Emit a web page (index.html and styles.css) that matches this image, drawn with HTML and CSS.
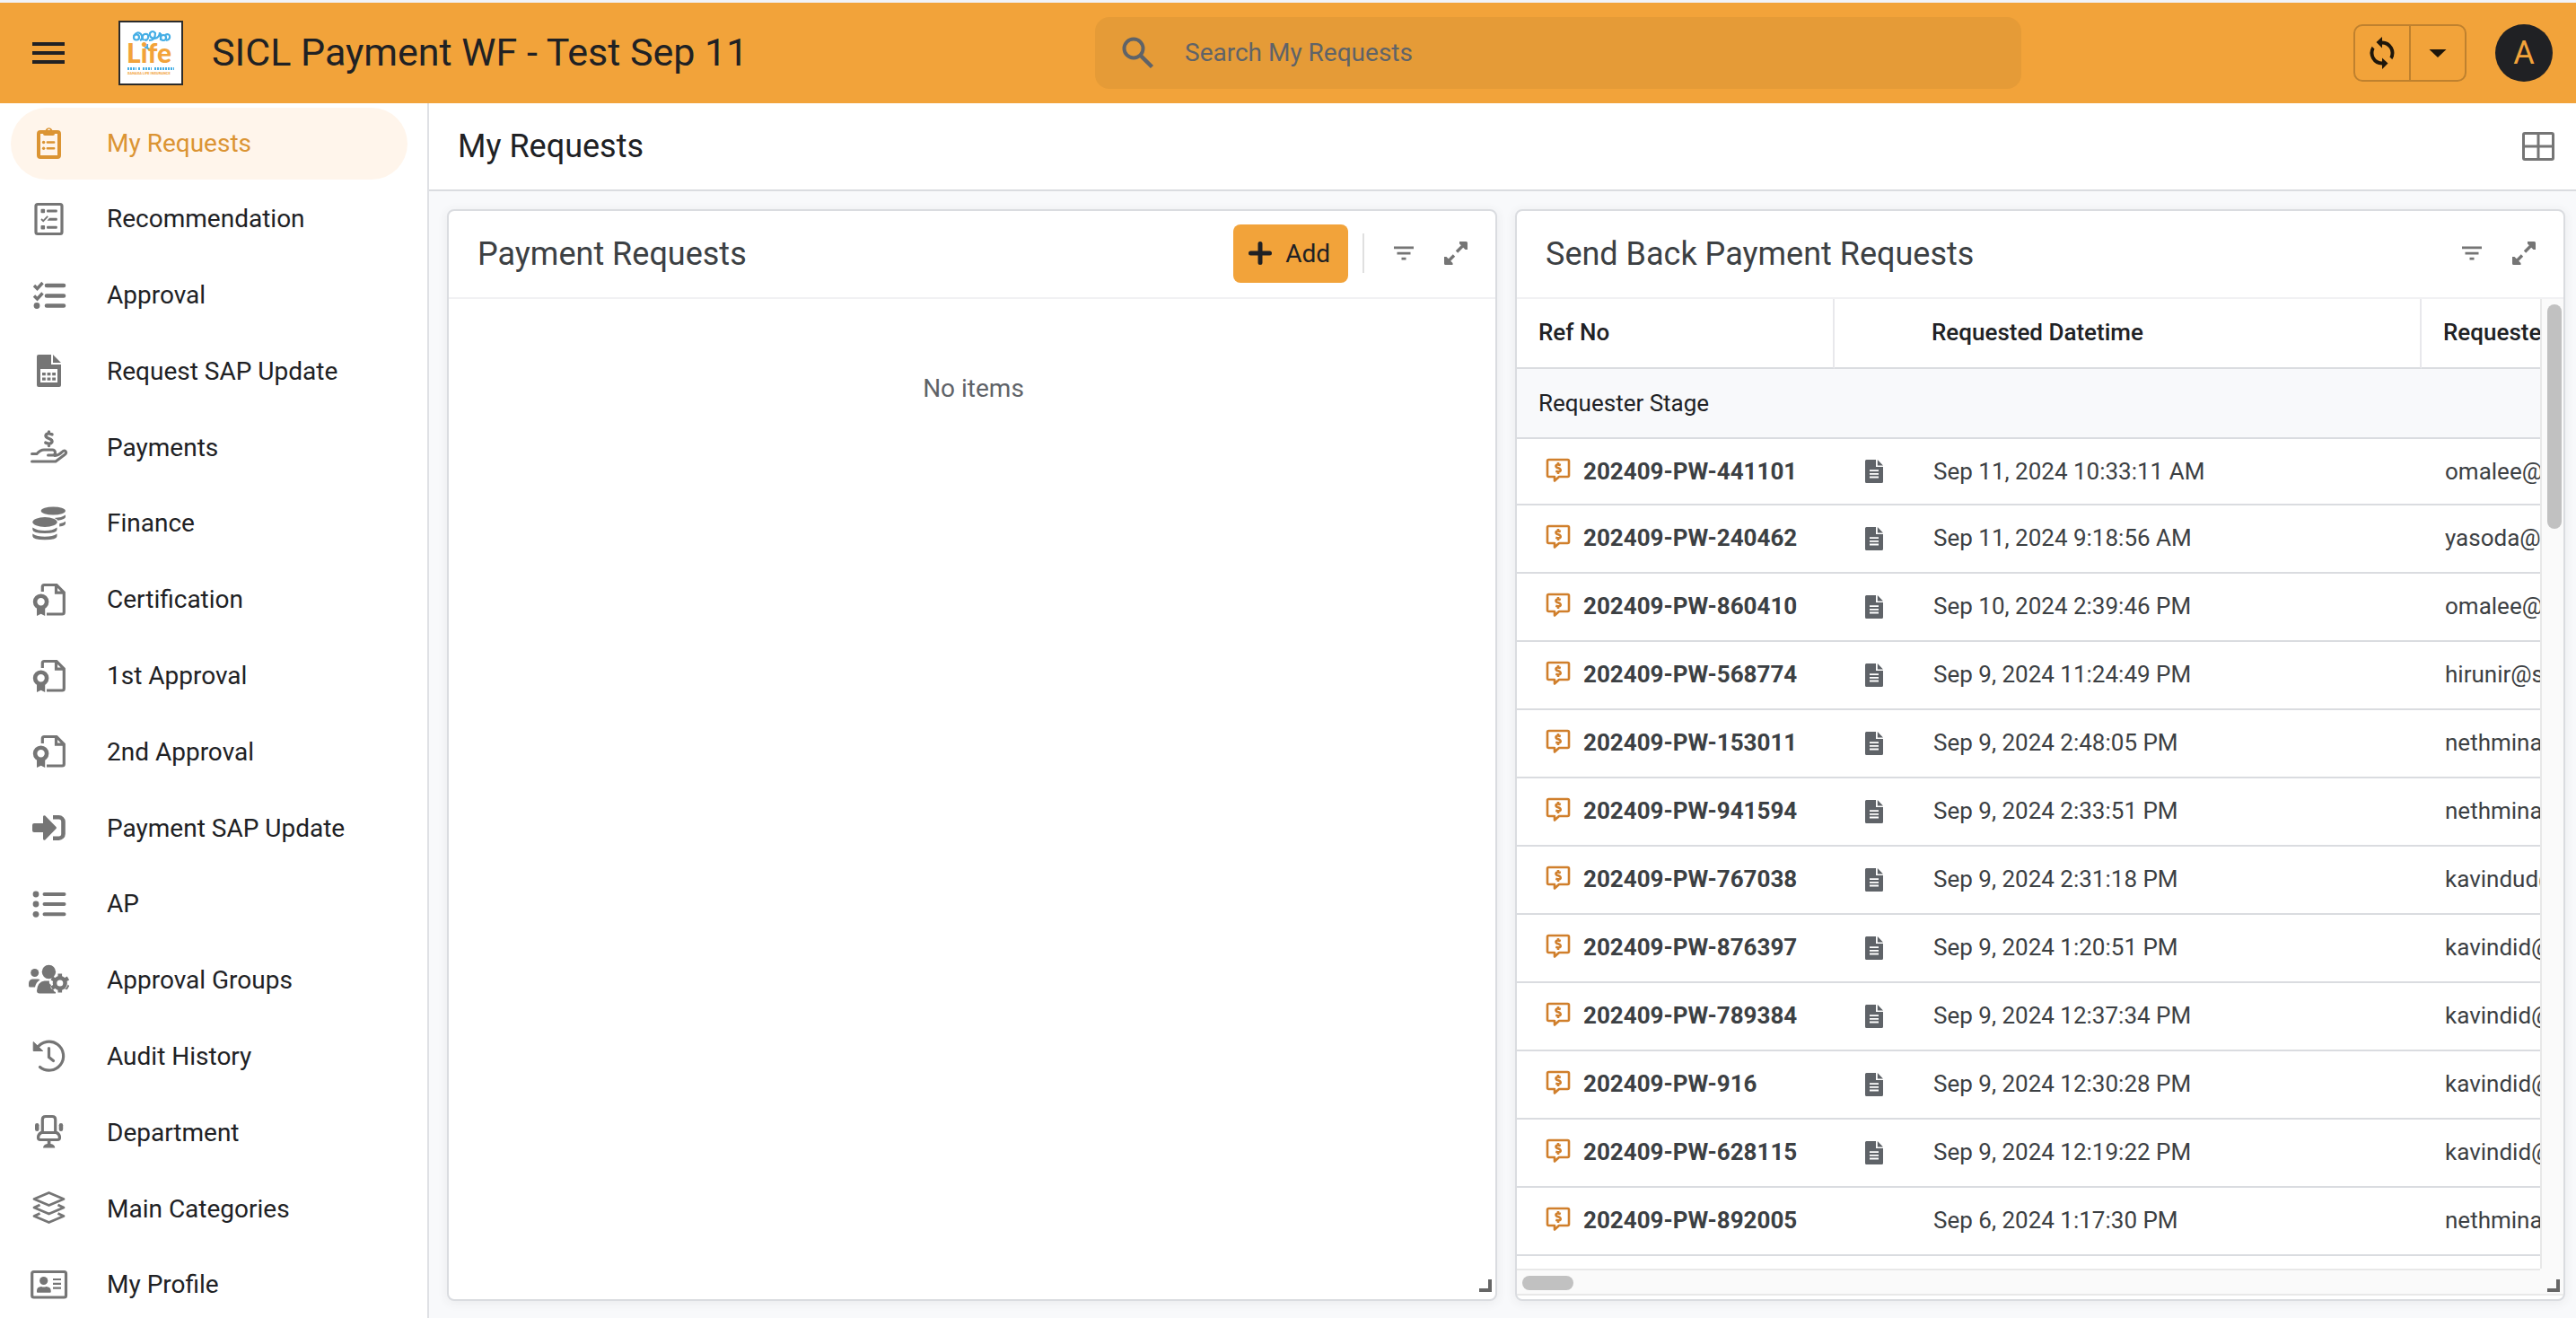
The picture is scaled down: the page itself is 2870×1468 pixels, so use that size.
FILE: index.html
```html
<!DOCTYPE html>
<html lang="en">
<head>
<meta charset="utf-8">
<title>SICL Payment WF - Test Sep 11</title>
<link rel="stylesheet" href="styles.css">
</head>
<body>
<svg class="sprite" aria-hidden="true">
  <symbol id="i-clipboard" viewBox="0 0 48 48"><rect x="13" y="12" width="23" height="28" rx="2" fill="none" stroke="currentColor" stroke-width="4"/><path fill="currentColor" fill-rule="evenodd" d="M18 10h2.600a4.200 4.200 0 0 1 7.800 0H31v4a2 2 0 0 1-2 2h-9a2 2 0 0 1-2-2zM24.500 8.600a1.500 1.500 0 1 0 0 3 1.500 1.500 0 0 0 0-3z"/><circle cx="18.600" cy="23.500" r="1.700" fill="currentColor"/><circle cx="18.600" cy="30.200" r="1.700" fill="currentColor"/><path d="M22.800 23.500h7.400M22.800 30.200h7.400" stroke="currentColor" stroke-width="2.400" stroke-linecap="round"/></symbol>
  <symbol id="i-ballot" viewBox="0 0 48 48"><rect x="10" y="7.500" width="29" height="33" rx="2" fill="none" stroke="currentColor" stroke-width="3.200"/><g fill="currentColor"><rect x="15.500" y="12.700" width="4.600" height="4.600" rx="1"/><rect x="15.500" y="31" width="4.600" height="4.600" rx="1"/><rect x="22" y="13.500" width="11.800" height="3" rx="1"/><rect x="22" y="31.800" width="11.800" height="3" rx="1"/><path d="M25 22.700h7.800a1 1 0 0 1 1 1v1a1 1 0 0 1-1 1H22.500z"/></g><path d="M16 24l2.200 2.200 5-5.400" fill="none" stroke="currentColor" stroke-width="1.800"/></symbol>
  <symbol id="i-checks" viewBox="0 0 48 48"><path d="M22 13h19M22 24.500h19M22 35.500h19" stroke="currentColor" stroke-width="4.600" stroke-linecap="round"/><path d="M8 13l3.500 3.500 6-6.500M8 24.500l3.500 3.500 6-6.500" fill="none" stroke="currentColor" stroke-width="3.400"/><circle cx="11" cy="35.500" r="3.400" fill="currentColor"/></symbol>
  <symbol id="i-sheet" viewBox="0 0 48 48"><path fill="currentColor" fill-rule="evenodd" d="M13 6h14v11h11v23a2 2 0 0 1-2 2H13a2 2 0 0 1-2-2V8a2 2 0 0 1 2-2zM15 22v15h19V22zM29 6l9 9h-9z"/><path fill="currentColor" d="M17 26h3.800v3.300H17zM22.600 26h3.800v3.300h-3.800zM28.200 26H32v3.300h-3.800zM17 31.500h3.800v3.300H17zM22.600 31.500h3.800v3.300h-3.800zM28.200 31.500H32v3.300h-3.800z"/></symbol>
  <symbol id="i-hand" viewBox="0 0 48 48"><g fill="none" stroke="currentColor" stroke-width="3" stroke-linecap="round" stroke-linejoin="round"><path d="M5.500 31.500H11q4-4.500 8-4.500h9.500a3 3 0 0 1 0 6H23.500M31 33.500q5-.5 8-4 2.500-2.500 4.200-.8 1.300 2-1.200 3.800L32 40H5.500"/><path d="M28 9.800q-6-2.200-7 1-.4 2.300 3.600 3.700 4.400 1.600 3.200 4.200-1.600 2.600-7 .4M24.500 7V8.500M24.500 20.500v2" stroke-width="3.400"/></g></symbol>
  <symbol id="i-coins" viewBox="0 0 48 48"><g fill="currentColor"><ellipse cx="29.300" cy="10" rx="13.600" ry="4.600"/><ellipse cx="20" cy="22.500" rx="13.700" ry="5.400"/><path d="M6.300 28.500q5 3.500 13.700 3.500t13.500-3.500v2.500q0 4-13.500 4T6.300 31zM6.300 35.500q5 3.300 13.700 3.300t13.500-3.300v2.700q0 4-13.500 4t-13.700-4zM43 14.500v2.300q0 2.700-8.500 3.900-1-1.500-4-2.700Q39 17.500 43 14.500zM43 21.800v2.200q0 2.500-6.800 3.500v-3.300q4.500-.6 6.800-2.400z"/></g></symbol>
  <symbol id="i-cert" viewBox="0 0 48 48"><g fill="none" stroke="currentColor" stroke-width="3.200"><path d="M17.300 15V9.500a2 2 0 0 1 2-2H33l8.300 8.300V38a2 2 0 0 1-2 2H22M32.500 8v8.200h8.500"/><circle cx="15.600" cy="26.300" r="6.500" stroke-width="4.600"/></g><path fill="currentColor" d="M11 33h9.200v9l-4.600-2.200L11 42z"/></symbol>
  <symbol id="i-signin" viewBox="0 0 48 48"><path fill="currentColor" d="M8 19h10v-7.500q.6-2 2.300-1L32.500 23q1 1 0 2L20.300 37.500q-1.700 1-2.300-1V29H8a2 2 0 0 1-2-2v-6a2 2 0 0 1 2-2z"/><path d="M29 12.300h6.500a5 5 0 0 1 5 5v13.400a5 5 0 0 1-5 5H29" fill="none" stroke="currentColor" stroke-width="4.600"/></symbol>
  <symbol id="i-list" viewBox="0 0 48 48"><g fill="currentColor"><circle cx="10" cy="13" r="3.400"/><circle cx="10" cy="24" r="3.400"/><circle cx="10" cy="35.300" r="3.400"/></g><path d="M19.500 13H41.500M19.500 24H41.500M19.500 35.300H41.500" stroke="currentColor" stroke-width="4" stroke-linecap="round"/></symbol>
  <symbol id="i-users" viewBox="0 0 48 48"><g fill="currentColor"><circle cx="8.700" cy="15.500" r="4.500"/><circle cx="24.400" cy="14.500" r="7.700"/><path d="M6 22.500h6q1.500 0 2.500.7-4.500 3-5.500 8.300H3.500Q2 31.500 2 30v-3q.3-4 4-4.500zM19.500 24.500h5.500q-.8 3 2 4.500-1.800 4 2.500 5.500.5 2 2.500 2.500v1.500H14q-3 0-3-3 .8-10 8.500-11z"/><circle cx="36.800" cy="27" r="5.800" fill="none" stroke="currentColor" stroke-width="4.600"/><path d="M34.500 16.500h4.600v4h-4.600zM34.500 33.500h4.600v4h-4.600zM26.500 23.600l2.300-4 3.500 2-2.300 4zM43.600 32.400l2.300-4 1.200 1.800-2.300 4-3.300-1zM26.500 30.400l3.500-2 2.300 4-3.500 2zM41.300 21.600l3.500-2 2.300 4-3.500 2z"/></g></symbol>
  <symbol id="i-history" viewBox="0 0 48 48"><g fill="none" stroke="currentColor" stroke-width="3.200" stroke-linecap="round"><path d="M11.500 14A16 16 0 1 1 14.500 35.500"/><path d="M24.500 14.500v10l5 4" /></g><path fill="currentColor" d="M7.200 7.500v10h10.500z" stroke="currentColor" stroke-linejoin="round"/></symbol>
  <symbol id="i-chair" viewBox="0 0 48 48"><g fill="none" stroke="currentColor" stroke-width="3.200"><path d="M17.300 24V10q0-3.500 3.500-3.500h7.400q3.500 0 3.500 3.500v14"/><path d="M16 24.500h17q3.500 2 3.500 5.500 0 2.500-2.500 2.500H15q-2.500 0-2.500-2.500 0-3.500 3.500-5.500z"/></g><g fill="currentColor"><rect x="9" y="14" width="4.500" height="9" rx="2.200"/><rect x="35.700" y="14" width="4.500" height="9" rx="2.200"/><path d="M22.800 33h3.600v4q4.600.7 4.900 4.500H18q.3-3.800 4.800-4.500z"/></g></symbol>
  <symbol id="i-layers" viewBox="0 0 48 48"><g fill="none" stroke="currentColor" stroke-width="2.800" stroke-linejoin="round"><path d="M24.500 6.500l16.500 7-16.500 7-16.500-7z"/><path d="M14.500 20L8 23l16.500 7L41 23l-6.500-3"/><path d="M14.500 29.500L8 32.500l16.500 7 16.500-7-6.500-3"/></g></symbol>
  <symbol id="i-idcard" viewBox="0 0 48 48"><rect x="5.700" y="9.500" width="37.800" height="28.500" rx="2" fill="none" stroke="currentColor" stroke-width="3.200"/><circle cx="18.700" cy="19.500" r="4.600" fill="currentColor"/><path fill="currentColor" d="M16 26q2.700 1 5.400 0 5.300.4 5.300 4.500v1.500q0 .8-.8.800H11.800q-.8 0-.8-.8v-1.500q0-4.100 5-4.500z"/><path d="M29 18h9M29 22.800h9M29 27.600h9" stroke="currentColor" stroke-width="2.200"/></symbol>
  <symbol id="i-filter" viewBox="0 0 24 24"><path fill="currentColor" d="M1 4.500h22v2.700H1zM4.500 10.700h15v2.700h-15zM9.500 16.700h5v2.700h-5z"/></symbol>
  <symbol id="i-expand" viewBox="0 0 28 28"><path fill="currentColor" d="M18 1h7.500q1.500 0 1.500 1.500V10h-2.500l-2.300-2.300-6 6-2.400-2.400 6-6L18 3.500zM1 18h2.500l2.300 2.300 5-5 2.400 2.400-5 5L10.500 25v2H2.500Q1 27 1 25.500z"/></symbol>
  <symbol id="i-pay" viewBox="0 0 28 28"><g fill="none" stroke="currentColor" stroke-linejoin="round"><path d="M3.500 2h21q1.500 0 1.500 1.500v16q0 1.500-1.500 1.500H15l-5 4.500V21H3.500Q2 21 2 19.500v-16Q2 2 3.500 2z" stroke-width="2.600"/><path d="M16.800 8q-4.800-1.500-5.300.8-.2 1.600 2.600 2.500 3.200 1 2.500 3-.9 1.800-5.300.5M14 5v2.500M14 15.500V18" stroke-width="2.600"/></g></symbol>
  <symbol id="i-doc" viewBox="0 0 20 26"><path fill="currentColor" fill-rule="evenodd" d="M1.500 0H12v8h8v16.500q0 1.500-1.500 1.500h-17Q0 26 0 24.500v-23Q0 0 1.500 0zM5 11.200v1.800h10v-1.800zM5 14.900v1.800h10v-1.800zM5 18.600v1.800h10v-1.800zM13.800 0L20 6.500h-6.200z"/></symbol>
</svg>

<header class="topbar">
  <div class="brand">
    <button class="menu" type="button" aria-label="Menu"><span></span><span></span><span></span></button>
    <svg class="logo" viewBox="0 0 72 72" role="img" aria-label="Sanasa Life logo">
      <rect x="1" y="1" width="70" height="70" fill="#fff" stroke="#2b2b2b" stroke-width="2"/>
      <g fill="none" stroke="#45aee5" stroke-width="2.200"><circle cx="20" cy="18.500" r="3"/><path d="M17 17q4-6 8-2 3 5-1 7M28 22q-3-5 1-7 5-1 4 4-1 4-4 2M34 22q7 0 7-8-3-4-6 0-1 5 5 6 6-1 6-7M47 14v8"/><circle cx="50" cy="19" r="3"/><path d="M53 22q5-1 4-5-1-3-5-1M32 26v4M29 29l6 3"/></g>
      <text x="9" y="47" class="logo-word">Life</text>
      <path d="M10 53.500h10M22 53.500h3M27 53.500h10M40 53.500h22" stroke="#45aee5" stroke-width="3" stroke-dasharray="2 1"/>
      <text x="10" y="60" class="logo-sub">SANASA LIFE INSURANCE</text>
    </svg>
    <div class="app-name">SICL Payment WF - Test Sep 11</div>
  </div>
  <label class="search">
    <svg viewBox="0 0 36 36" aria-hidden="true"><circle cx="13" cy="13" r="10.500" fill="none" stroke="currentColor" stroke-width="4"/><path d="M20.500 20.500L33.500 33.500" stroke="currentColor" stroke-width="4.500"/></svg>
    <input type="search" placeholder="Search My Requests" aria-label="Search My Requests">
  </label>
  <div class="tools">
    <div class="sync">
      <button type="button" aria-label="Sync"><svg viewBox="0 0 36 36"><path fill="currentColor" d="M18 0v4.500A13.500 13.500 0 0 1 29.300 25.200L26.500 22.500A9.700 9.700 0 0 0 18 8.400V12.500L11.500 6zM18 36v-4.500A13.500 13.500 0 0 1 6.700 10.800L9.500 13.500A9.700 9.700 0 0 0 18 27.600V23.500l6.500 6z"/></svg></button>
      <button type="button" aria-label="Sync options"><svg viewBox="0 0 36 36"><path fill="currentColor" d="M8.500 14h19L18 23z"/></svg></button>
    </div>
    <button class="avatar" type="button">A</button>
  </div>
</header>

<div class="shell">
  <nav class="sidebar">
    <a class="active" href="#"><svg><use href="#i-clipboard"/></svg>My Requests</a>
    <a href="#"><svg><use href="#i-ballot"/></svg>Recommendation</a>
    <a href="#"><svg><use href="#i-checks"/></svg>Approval</a>
    <a href="#"><svg><use href="#i-sheet"/></svg>Request SAP Update</a>
    <a href="#"><svg><use href="#i-hand"/></svg>Payments</a>
    <a href="#"><svg><use href="#i-coins"/></svg>Finance</a>
    <a href="#"><svg><use href="#i-cert"/></svg>Certification</a>
    <a href="#"><svg><use href="#i-cert"/></svg>1st Approval</a>
    <a href="#"><svg><use href="#i-cert"/></svg>2nd Approval</a>
    <a href="#"><svg><use href="#i-signin"/></svg>Payment SAP Update</a>
    <a href="#"><svg><use href="#i-list"/></svg>AP</a>
    <a href="#"><svg><use href="#i-users"/></svg>Approval Groups</a>
    <a href="#"><svg><use href="#i-history"/></svg>Audit History</a>
    <a href="#"><svg><use href="#i-chair"/></svg>Department</a>
    <a href="#"><svg><use href="#i-layers"/></svg>Main Categories</a>
    <a href="#"><svg><use href="#i-idcard"/></svg>My Profile</a>
  </nav>

  <main class="main">
    <div class="view-head">
      <h1>My Requests</h1>
      <button type="button" aria-label="Layout"><svg viewBox="0 0 36 32"><path d="M3 1.500h30q1.500 0 1.500 1.500v26q0 1.500-1.500 1.500H3Q1.500 30.500 1.500 29V3Q1.500 1.500 3 1.500zM18 1.500v29M1.500 16h33" fill="none" stroke="currentColor" stroke-width="3"/></svg></button>
    </div>
    <div class="cards">
      <section class="card">
        <div class="card-head">
          <h2>Payment Requests</h2>
          <button class="add" type="button"><svg viewBox="0 0 26 26" aria-hidden="true"><path d="M13 2.500v21M2.500 13h21" stroke="currentColor" stroke-width="5" stroke-linecap="round"/></svg>Add</button>
          <span class="rule"></span>
          <button class="tool" type="button" aria-label="Filter"><svg><use href="#i-filter"/></svg></button>
          <button class="tool" type="button" aria-label="Expand"><svg class="wide"><use href="#i-expand"/></svg></button>
        </div>
        <p class="empty">No items</p>
        <i class="grip"></i>
      </section>

      <section class="card">
        <div class="card-head">
          <h2>Send Back Payment Requests</h2>
          <button class="tool" type="button" aria-label="Filter"><svg><use href="#i-filter"/></svg></button>
          <button class="tool" type="button" aria-label="Expand"><svg class="wide"><use href="#i-expand"/></svg></button>
        </div>
        <div class="scroll">
          <div class="view">
            <table>
              <colgroup><col class="c-ref"><col class="c-doc"><col class="c-date"><col class="c-user"></colgroup>
              <thead><tr><th class="line">Ref No</th><th></th><th class="line">Requested Datetime</th><th>Requested By</th></tr></thead>
              <tbody>
                <tr class="group"><td colspan="4">Requester Stage</td></tr>
                <tr><td class="ref"><svg><use href="#i-pay"/></svg>202409-PW-441101</td><td class="doc"><svg><use href="#i-doc"/></svg></td><td>Sep 11, 2024 10:33:11 AM</td><td>omalee@</td></tr>
                <tr><td class="ref"><svg><use href="#i-pay"/></svg>202409-PW-240462</td><td class="doc"><svg><use href="#i-doc"/></svg></td><td>Sep 11, 2024 9:18:56 AM</td><td>yasoda@</td></tr>
                <tr><td class="ref"><svg><use href="#i-pay"/></svg>202409-PW-860410</td><td class="doc"><svg><use href="#i-doc"/></svg></td><td>Sep 10, 2024 2:39:46 PM</td><td>omalee@</td></tr>
                <tr><td class="ref"><svg><use href="#i-pay"/></svg>202409-PW-568774</td><td class="doc"><svg><use href="#i-doc"/></svg></td><td>Sep 9, 2024 11:24:49 PM</td><td>hirunir@s</td></tr>
                <tr><td class="ref"><svg><use href="#i-pay"/></svg>202409-PW-153011</td><td class="doc"><svg><use href="#i-doc"/></svg></td><td>Sep 9, 2024 2:48:05 PM</td><td>nethmina</td></tr>
                <tr><td class="ref"><svg><use href="#i-pay"/></svg>202409-PW-941594</td><td class="doc"><svg><use href="#i-doc"/></svg></td><td>Sep 9, 2024 2:33:51 PM</td><td>nethmina</td></tr>
                <tr><td class="ref"><svg><use href="#i-pay"/></svg>202409-PW-767038</td><td class="doc"><svg><use href="#i-doc"/></svg></td><td>Sep 9, 2024 2:31:18 PM</td><td>kavindud@</td></tr>
                <tr><td class="ref"><svg><use href="#i-pay"/></svg>202409-PW-876397</td><td class="doc"><svg><use href="#i-doc"/></svg></td><td>Sep 9, 2024 1:20:51 PM</td><td>kavindid@</td></tr>
                <tr><td class="ref"><svg><use href="#i-pay"/></svg>202409-PW-789384</td><td class="doc"><svg><use href="#i-doc"/></svg></td><td>Sep 9, 2024 12:37:34 PM</td><td>kavindid@</td></tr>
                <tr><td class="ref"><svg><use href="#i-pay"/></svg>202409-PW-916</td><td class="doc"><svg><use href="#i-doc"/></svg></td><td>Sep 9, 2024 12:30:28 PM</td><td>kavindid@</td></tr>
                <tr><td class="ref"><svg><use href="#i-pay"/></svg>202409-PW-628115</td><td class="doc"><svg><use href="#i-doc"/></svg></td><td>Sep 9, 2024 12:19:22 PM</td><td>kavindid@</td></tr>
                <tr><td class="ref"><svg><use href="#i-pay"/></svg>202409-PW-892005</td><td class="doc"></td><td>Sep 6, 2024 1:17:30 PM</td><td>nethmina</td></tr>
              </tbody>
            </table>
          </div>
          <div class="vbar"><span></span></div>
          <div class="hbar"><span></span></div>
          <div class="corner"></div>
        </div>
        <i class="grip"></i>
      </section>
    </div>
  </main>
</div>
</body>
</html>
```
FILE: styles.css
```css
* { box-sizing: border-box; }

body {
  margin: 0;
  height: 100vh;
  overflow: hidden;
  display: flex;
  flex-direction: column;
  border-top: 3px solid #f1f3f9;
  background: #fff;
  color: #202124;
  font-family: Roboto, "Liberation Sans", sans-serif;
  font-size: 28px;
}

button {
  margin: 0;
  padding: 0;
  border: 0;
  background: none;
  color: inherit;
  font: inherit;
}

svg { display: block; flex: none; }
.sprite { position: absolute; width: 0; height: 0; }
h1, h2, p { margin: 0; font-weight: 400; }

/* Top bar */
.topbar {
  flex: none;
  height: 112px;
  display: grid;
  grid-template-columns: 1220fr 1032fr 618fr;
  align-items: center;
  background: #f2a33a;
}
.brand { display: flex; align-items: center; padding-left: 36px; }
.menu { display: grid; gap: 6px; width: 36px; margin-right: 60px; }
.menu span { height: 4px; background: #202124; }
.logo { width: 72px; height: 72px; margin-right: 32px; }
.logo-word { font: 900 30px Lato, sans-serif; fill: #f2a33a; }
.logo-sub { font: 700 4px Roboto, sans-serif; fill: #f2a33a; }
.app-name { padding-bottom: 2px; font-size: 43px; line-height: 52px; white-space: nowrap; }

.search {
  display: flex;
  align-items: center;
  gap: 34px;
  height: 80px;
  padding: 0 30px;
  border-radius: 16px;
  background: #e59b37;
  color: #5f6368;
}
.search svg { width: 36px; height: 36px; }
.search input {
  flex: 1;
  min-width: 0;
  padding: 0 0 2px;
  border: 0;
  outline: 0;
  background: none;
  color: inherit;
  font: inherit;
}
.search input::placeholder { color: #5f6368; opacity: 1; }

.tools { display: flex; justify-content: flex-end; gap: 32px; padding-right: 26px; }
.sync { display: flex; border: 2px solid #bf812e; border-radius: 10px; color: #1e160b; }
.sync button { display: flex; align-items: center; justify-content: center; width: 60px; height: 60px; }
.sync button + button { width: 62px; border-left: 2px solid #bf812e; }
.sync svg { width: 36px; height: 36px; }
.avatar {
  width: 64px;
  height: 64px;
  border-radius: 50%;
  background: #202124;
  color: #f2a33a;
  font-size: 36px;
  font-weight: 400;
}

/* Body */
.shell { flex: 1; min-height: 0; display: flex; }

.sidebar {
  flex: none;
  width: 478px;
  height: calc(100vh - 111px);
  display: flex;
  flex-direction: column;
  justify-content: space-between;
  padding: 5px 22px 0 12px;
  border-right: 2px solid #dfe1e5;
}
.sidebar a {
  flex: none;
  height: 80px;
  display: flex;
  align-items: center;
  gap: 41px;
  padding: 0 18px 2px;
  border-radius: 40px;
  color: #202124;
  text-decoration: none;
}
.sidebar svg { width: 48px; height: 48px; color: #757575; }
.sidebar .active { background: #fff5eb; color: #db9433; }
.sidebar .active svg { color: #db9433; }

.main { flex: 1; min-width: 0; display: flex; flex-direction: column; background: #f8f9fb; }
.view-head {
  flex: none;
  height: 98px;
  display: flex;
  align-items: center;
  justify-content: space-between;
  padding: 0 24px 0 32px;
  border-bottom: 2px solid #dadce0;
  background: #fff;
}
.view-head h1 { font-size: 36px; }
.view-head button { color: #757575; }
.view-head svg { width: 36px; height: 32px; }

.cards {
  flex: 1;
  min-height: 0;
  display: grid;
  grid-template-columns: minmax(0, 1fr) minmax(0, 1fr);
  gap: 20px;
  padding: 20px 12px 19px 20px;
}
.card {
  position: relative;
  min-height: 0;
  display: flex;
  flex-direction: column;
  border: 2px solid #dadce0;
  border-radius: 8px;
  background: #fff;
  box-shadow: 0 2px 12px rgba(60, 64, 67, .08);
}
.card-head {
  flex: none;
  height: 98px;
  display: flex;
  align-items: center;
  padding: 0 30px 2px 32px;
  border-bottom: 2px solid #f1f1f3;
}
.card-head h2 { flex: 1; padding-top: 2px; color: #3c4043; font-size: 36px; }
.add {
  display: flex;
  align-items: center;
  gap: 15px;
  height: 65px;
  padding: 0 20px 0 17px;
  border-radius: 8px;
  background: #f2a33a;
}
.add svg { width: 26px; height: 26px; }
.rule { width: 2px; height: 44px; margin: 0 0 0 16px; background: #e0e0e0; }
.tool { margin-left: 32px; color: #757575; }
.tool svg { width: 24px; height: 24px; }
.tool .wide { width: 28px; height: 28px; }
.empty { padding: 83px 0 0 3px; text-align: center; color: #5f6368; }

.grip {
  position: absolute;
  right: 4px;
  bottom: 8px;
  width: 14px;
  height: 14px;
  border: solid #666;
  border-width: 0 4px 4px 0;
}

/* Table with its scroll bars */
.scroll {
  flex: 1;
  min-height: 0;
  display: grid;
  grid-template-columns: minmax(0, 1fr) 26px;
  grid-template-rows: minmax(0, 1fr) 30px;
  margin-bottom: 4px;
}
.view { overflow: hidden; }
table { width: 1508px; table-layout: fixed; border-spacing: 0; font-size: 26px; }
.c-ref { width: 354px; }
.c-doc { width: 84px; }
.c-date { width: 570px; }
th, td {
  height: 76px;
  padding: 0 24px 2px;
  border-bottom: 2px solid #dadce0;
  color: #3c4043;
  text-align: left;
  white-space: nowrap;
}
td { padding-left: 26px; }
th { height: 78px; color: #202124; font-weight: 500; }
.line { border-right: 2px solid #e8e8ec; }
.group td { height: 78px; padding: 0 24px; background: #f8f9fb; color: #202124; }
.group + tr td { height: 74px; padding-bottom: 0; }
.ref { padding-left: 32px; font-weight: 700; }
.ref svg { display: inline-block; width: 28px; height: 28px; margin-right: 14px; vertical-align: -4px; color: #d07f2c; }
.doc { padding: 0 0 0 34px; color: #5f6368; }
.doc svg { width: 20px; height: 26px; color: #5f6368; }

.vbar { padding: 6px 2px 0 6px; border-left: 2px solid #e8e8e8; background: #fafafa; }
.vbar span { display: block; width: 16px; height: 250px; border-radius: 8px; background: #c1c1c1; }
.hbar { padding: 6px; border: solid #e8e8e8; border-width: 2px 0; background: #fafafa; }
.hbar span { display: block; width: 57px; height: 16px; border-radius: 8px; background: #c1c1c1; }
.corner { border-bottom: 2px solid #ececec; background: #fafafa; }
```
